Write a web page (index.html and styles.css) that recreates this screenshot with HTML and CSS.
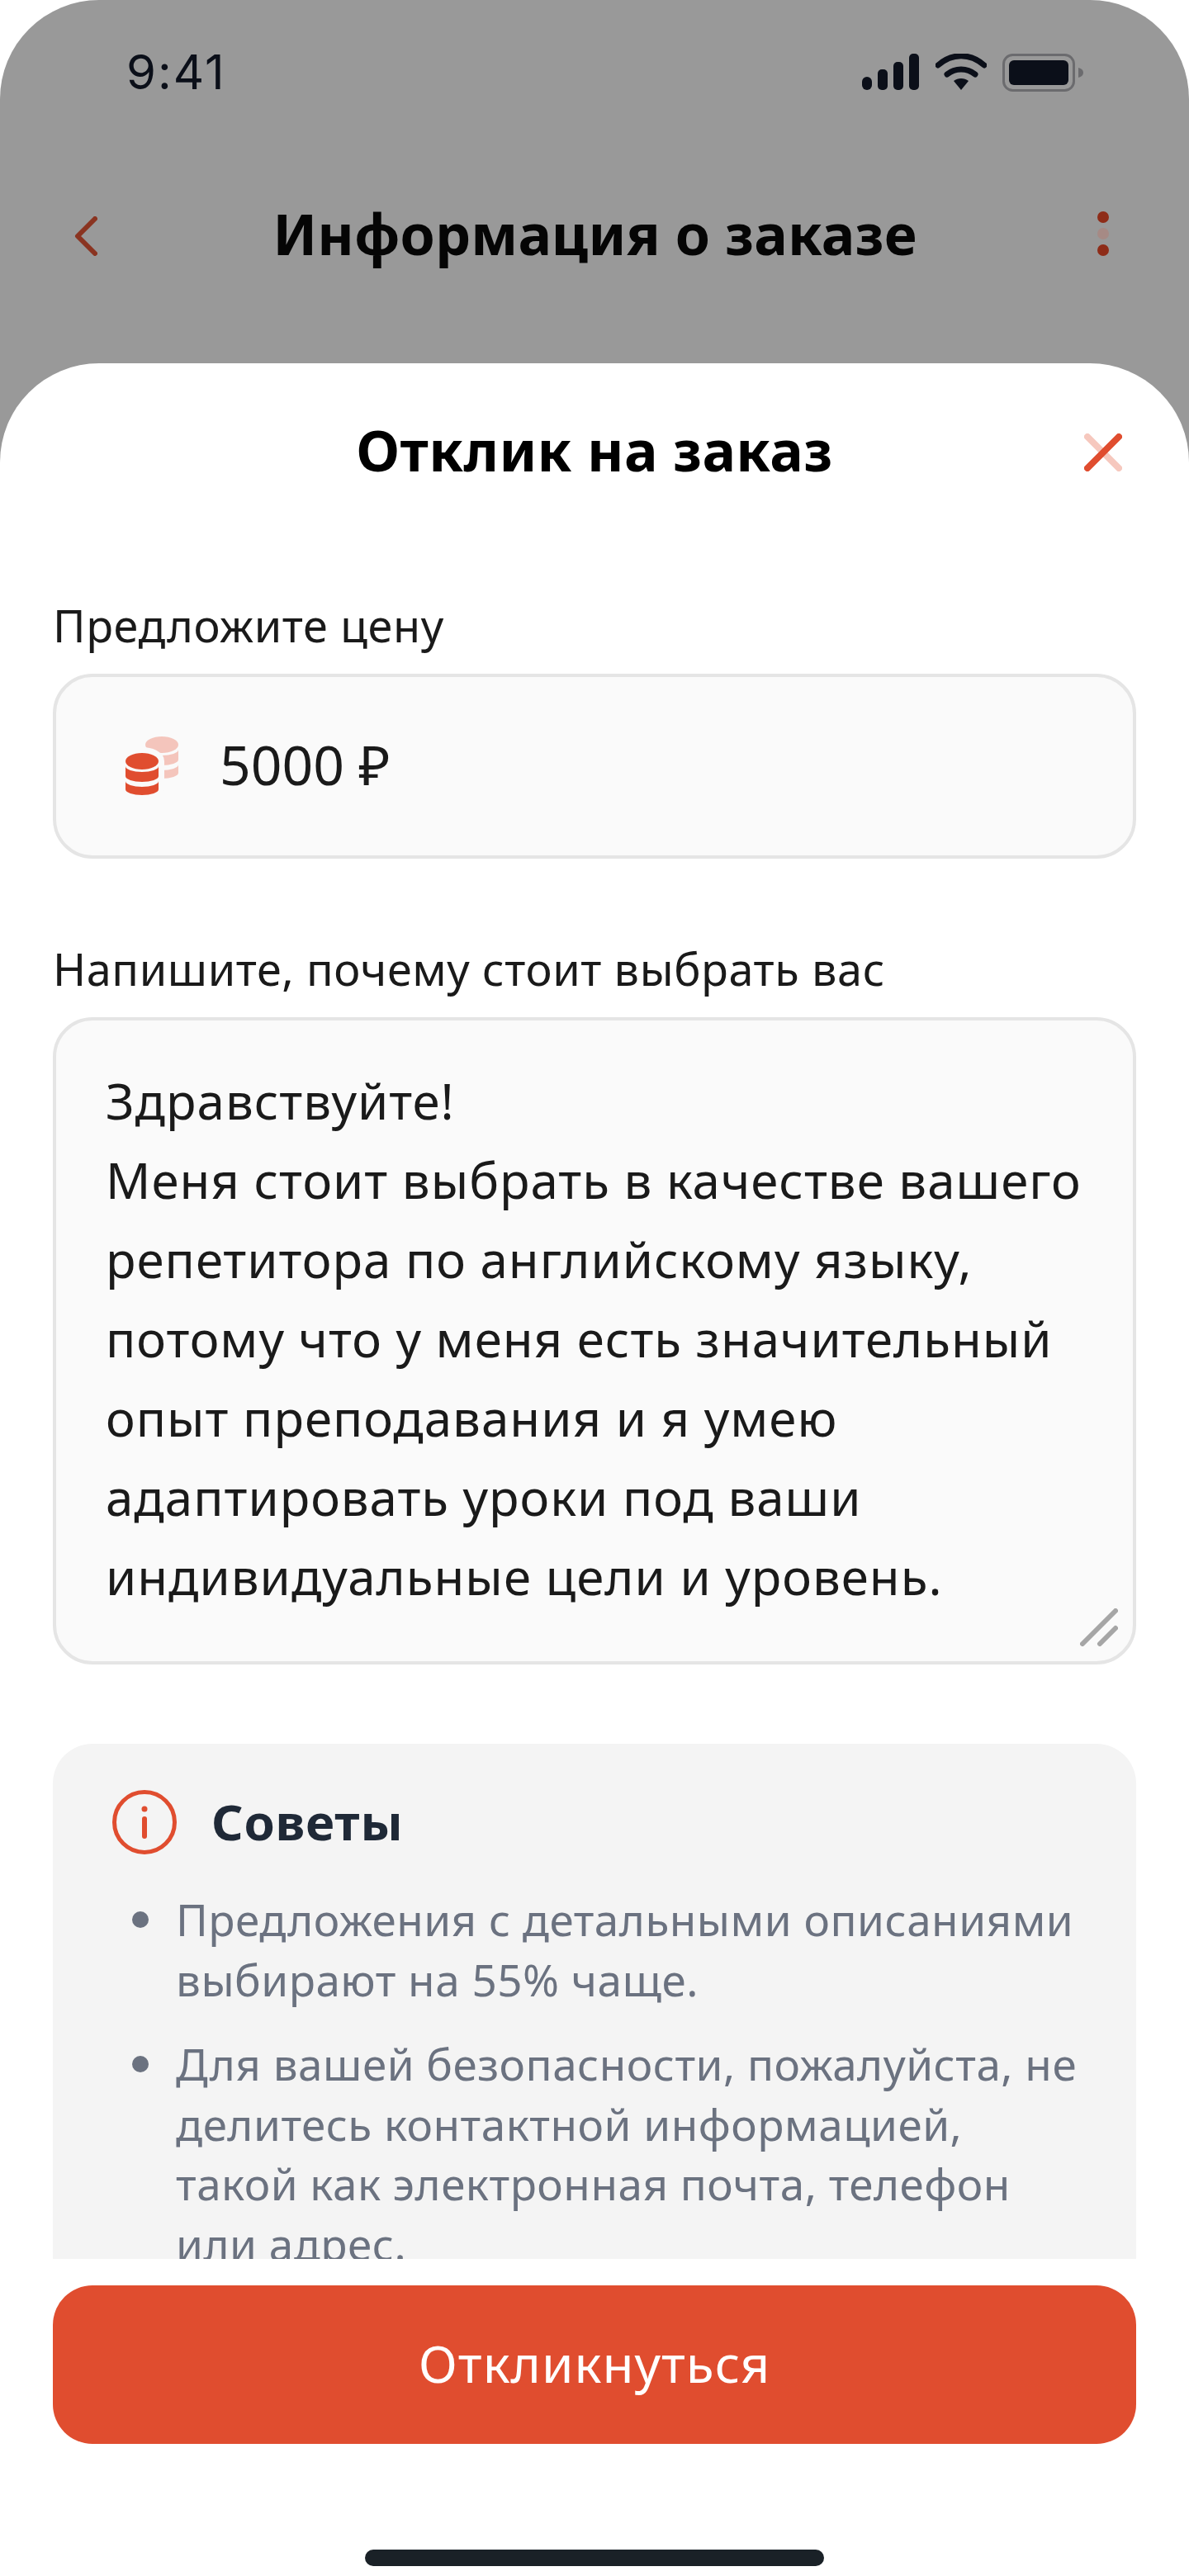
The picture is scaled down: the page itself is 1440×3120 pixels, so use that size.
FILE: index.html
```html
<!DOCTYPE html>
<html lang="ru">
<head>
    <meta charset="UTF-8">
    <meta name="viewport" content="width=device-width, initial-scale=1.0">
    <title>Отклик на заказ</title>
    <link rel="stylesheet" href="styles.css">
</head>
<body>
    <div class="screen">
        <div class="status-bar">
            <span class="time">9:41</span>
            <div class="status-icons">
                <svg class="signal" width="70" height="44" viewBox="0 0 70 44">
                    <rect x="0" y="28" width="12" height="16" rx="6"/>
                    <rect x="19" y="19" width="12" height="25" rx="5"/>
                    <rect x="38" y="10" width="12" height="34" rx="5"/>
                    <rect x="57" y="0" width="12" height="44" rx="5"/>
                </svg>
                <svg class="wifi" width="62" height="44" viewBox="0 0 62 44">
                    <path d="M3 14 C20 -1 42 -1 59 14" fill="none" stroke="#0b0f19" stroke-width="7" stroke-linecap="round"/>
                    <path d="M14 25 C24 17 38 17 48 25" fill="none" stroke="#0b0f19" stroke-width="7" stroke-linecap="round"/>
                    <path d="M22 33 C27 29 35 29 40 33 L31 44 Z" fill="#0b0f19"/>
                </svg>
                <svg class="battery" width="98" height="46" viewBox="0 0 98 46">
                    <rect x="1.5" y="1.5" width="85" height="43" rx="11" fill="none" stroke="#6b6b6e" stroke-width="3"/>
                    <rect x="8" y="8" width="72" height="30" rx="6" fill="#0b0f19"/>
                    <path d="M92 17 C96 18 98 20 98 23 C98 26 96 28 92 29 Z" fill="#6b6b6e"/>
                </svg>
            </div>
        </div>

        <div class="nav-bar">
            <svg class="nav-back" width="28" height="48" viewBox="0 0 28 48">
                <path d="M25 3 L4 24 L25 45" fill="none" stroke="#8a3421" stroke-width="6" stroke-linecap="round" stroke-linejoin="round"/>
            </svg>
            <h1 class="nav-title">Информация о заказе</h1>
            <div class="nav-more">
                <span class="nav-dot"></span>
                <span class="nav-dot pale"></span>
                <span class="nav-dot"></span>
            </div>
        </div>

        <div class="sheet">
            <div class="sheet-head">
                <h2 class="sheet-title">Отклик на заказ</h2>
                <svg class="sheet-close" width="46" height="46" viewBox="0 0 46 46">
                    <path d="M4 4 L42 42" stroke="#f6c8be" stroke-width="8" stroke-linecap="round"/>
                    <path d="M42 4 L4 42" stroke="#e04d2f" stroke-width="8" stroke-linecap="round"/>
                </svg>
            </div>

            <div class="sheet-body">
                <label class="field-label">Предложите цену</label>
                <div class="price-box">
                    <svg class="coins" width="64" height="72" viewBox="0 0 64 72">
                        <g fill="#f4c5bc">
                            <ellipse cx="44" cy="10" rx="20" ry="10"/>
                            <path d="M24 16 A20 7 0 0 0 64 16 V28 A20 7 0 0 1 24 28 Z"/>
                            <path d="M24 34 A20 7 0 0 0 64 34 V44 A20 7 0 0 1 24 44 Z"/>
                        </g>
                        <path d="M0 30 A20 10 0 0 1 40 30 V64 A20 7 0 0 1 0 64 Z" fill="#fafafa" stroke="#fafafa" stroke-width="14"/>
                        <g fill="#e04d2f">
                            <ellipse cx="20" cy="30" rx="20" ry="10"/>
                            <path d="M0 36 A20 7 0 0 0 40 36 V48 A20 7 0 0 1 0 48 Z"/>
                            <path d="M0 54 A20 7 0 0 0 40 54 V64 A20 7 0 0 1 0 64 Z"/>
                        </g>
                    </svg>
                    <span class="price-value">5000 ₽</span>
                </div>

                <label class="field-label why">Напишите, почему стоит выбрать вас</label>
                <div class="message-box">
                    Здравствуйте!<br>
                    Меня стоит выбрать в качестве вашего<br>
                    репетитора по английскому языку,<br>
                    потому что у меня есть значительный<br>
                    опыт преподавания и я умею<br>
                    адаптировать уроки под ваши<br>
                    индивидуальные цели и уровень.
                    <svg class="resize-grip" width="46" height="46" viewBox="0 0 46 46">
                        <path d="M3 43 L43 3 M24 43 L43 24" stroke="#a6a6a6" stroke-width="6" stroke-linecap="round"/>
                    </svg>
                </div>

                <div class="tips">
                    <div class="tips-head">
                        <svg class="tips-icon" width="78" height="78" viewBox="0 0 78 78">
                            <circle cx="39" cy="39" r="36.5" fill="none" stroke="#e04d2f" stroke-width="5"/>
                            <circle cx="39" cy="23" r="3.5" fill="#e04d2f"/>
                            <path d="M39 35 L39 56" stroke="#e04d2f" stroke-width="6" stroke-linecap="round"/>
                        </svg>
                        <span class="tips-title">Советы</span>
                    </div>
                    <ul class="tips-list">
                        <li>Предложения с детальными описаниями<br>выбирают на 55% чаще.</li>
                        <li>Для вашей безопасности, пожалуйста, не<br>делитесь контактной информацией,<br>такой как электронная почта, телефон<br>или адрес.</li>
                    </ul>
                </div>
            </div>

            <div class="sheet-foot">
                <button class="submit-btn">Откликнуться</button>
                <div class="home-indicator"></div>
            </div>
        </div>
    </div>
</body>
</html>
```

FILE: styles.css
```css
* {
    box-sizing: border-box;
}
html, body {
    margin: 0;
    padding: 0;
    background-color: #fff;
}
body {
    font-family: "Noto Sans", "Open Sans", sans-serif;
    color: #1a1a1a;
}
.screen {
    width: 1440px;
    height: 3120px;
    display: flex;
    flex-direction: column;
    background-color: #999;
    border-radius: 120px 120px 0 0;
    overflow: hidden;
}
.status-bar {
    height: 176px;
    flex: none;
    display: flex;
    justify-content: space-between;
    align-items: flex-start;
    padding: 54px 128px 0 153px;
}
.time {
    font-family: "Inter", sans-serif;
    font-size: 58px;
    line-height: 66px;
    letter-spacing: 2px;
    color: #0b0f19;
}
.status-icons {
    display: flex;
    gap: 19px;
    padding-top: 11px;
}
.signal {
    fill: #0b0f19;
}
.nav-bar {
    height: 264px;
    flex: none;
    display: flex;
    align-items: flex-start;
    justify-content: space-between;
    padding: 54px 97px 0 90px;
}
.nav-back {
    margin-top: 32px;
}
.nav-title {
    margin: 0 6px 0 0;
    font-size: 68px;
    font-weight: 700;
    line-height: 106px;
    letter-spacing: 0.2px;
    color: #050505;
}
.nav-more {
    display: flex;
    flex-direction: column;
    gap: 6px;
    margin-top: 26px;
}
.nav-dot {
    width: 14px;
    height: 14px;
    border-radius: 50%;
    background-color: #8e2c18;
}
.nav-dot.pale {
    background-color: #a68a85;
}
.sheet {
    flex: 1;
    display: flex;
    flex-direction: column;
    min-height: 0;
    background-color: #fff;
    border-radius: 120px 120px 0 0;
}
.sheet-head {
    position: relative;
    height: 120px;
    flex: none;
    display: flex;
    align-items: center;
    justify-content: center;
    margin-top: 44px;
}
.sheet-title {
    margin: 0;
    font-size: 68px;
    font-weight: 700;
    letter-spacing: 0.4px;
    color: #000;
}
.sheet-close {
    position: absolute;
    right: 81px;
    top: 41px;
}
.sheet-body {
    flex: 1;
    min-height: 0;
    overflow: hidden;
    padding: 0 64px;
}
.field-label {
    display: block;
    margin-top: 118px;
    font-size: 54px;
    line-height: 70px;
    letter-spacing: 0.6px;
    color: #1a1a1a;
}
.field-label.why {
    margin-top: 98px;
}
.price-box {
    height: 224px;
    margin-top: 24px;
    display: flex;
    align-items: center;
    gap: 50px;
    padding-left: 84px;
    background-color: #fafafa;
    border: 4px solid #e5e5e5;
    border-radius: 48px;
}
.price-value {
    font-size: 66px;
    padding-bottom: 6px;
}
.message-box {
    position: relative;
    height: 784px;
    margin-top: 24px;
    padding: 49px 60px 0;
    font-size: 60px;
    line-height: 96px;
    letter-spacing: 1px;
    background-color: #fafafa;
    border: 4px solid #e5e5e5;
    border-radius: 48px;
}
.resize-grip {
    position: absolute;
    right: 18px;
    bottom: 18px;
}
.tips {
    margin-top: 96px;
    padding: 53px 0 60px 72px;
    min-height: 700px;
    background-color: #f4f4f4;
    border-radius: 48px;
}
.tips-head {
    display: flex;
    align-items: center;
    gap: 42px;
}
.tips-title {
    padding-bottom: 2px;
    font-size: 60px;
    font-weight: 700;
    letter-spacing: 0.8px;
    color: #1f2937;
}
.tips-list {
    margin: 40px 0 0;
    padding: 0 0 0 77px;
    list-style: none;
    font-size: 53px;
    line-height: 72.5px;
    letter-spacing: 0.5px;
    white-space: nowrap;
    color: #6b7280;
}
.tips-list li {
    position: relative;
    margin-bottom: 30px;
}
.tips-list li::before {
    content: "";
    position: absolute;
    left: -53px;
    top: 26px;
    width: 20px;
    height: 20px;
    border-radius: 50%;
    background-color: #6b7280;
}
.sheet-foot {
    height: 384px;
    flex: none;
    padding: 32px 64px 0;
    display: flex;
    flex-direction: column;
    align-items: center;
    background-color: #fff;
}
.submit-btn {
    width: 100%;
    height: 192px;
    flex: none;
    padding: 0 0 4px;
    font-family: inherit;
    font-size: 62px;
    letter-spacing: 1px;
    color: #fff;
    background-color: #e04d2f;
    border: none;
    border-radius: 48px;
}
.home-indicator {
    width: 556px;
    height: 20px;
    margin-top: 128px;
    border-radius: 10px;
    background-color: #1a2127;
}
```
